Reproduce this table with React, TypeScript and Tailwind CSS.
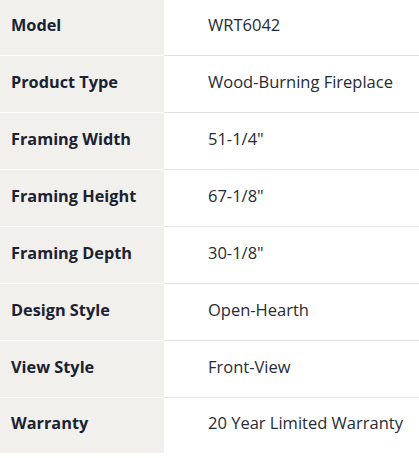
import React from 'react';

const specs = [
  { label: 'Model', value: 'WRT6042' },
  { label: 'Product Type', value: 'Wood-Burning Fireplace' },
  { label: 'Framing Width', value: '51-1/4"' },
  { label: 'Framing Height', value: '67-1/8"' },
  { label: 'Framing Depth', value: '30-1/8"' },
  { label: 'Design Style', value: 'Open-Hearth' },
  { label: 'View Style', value: 'Front-View' },
  { label: 'Warranty', value: '20 Year Limited Warranty' },
];

export default function App() {
  return (
    <div className="w-[419px] h-[458px] bg-white font-['Open_Sans',sans-serif]">
      <div className="flex flex-col">
        {specs.map((spec, index) => {
          const first = index === 0;
          const last = index === specs.length - 1;
          return (
            <div
              key={spec.label}
              className={`flex ${first ? 'h-[56px]' : last ? 'h-[55px]' : 'h-[57px]'}`}
            >
              <div
                className={`w-[164px] flex items-center pl-[11px] pb-[4px] bg-[#f1f0ec] font-bold text-[16.3px] text-[#1b2232] ${
                  last ? '' : 'border-b border-white'
                }`}
              >
                {spec.label}
              </div>
              <div
                className={`flex-1 flex items-center pl-[44px] pb-[4px] text-[16.5px] text-[#262b36] ${
                  last ? '' : 'border-b border-[#e2e2e2]'
                }`}
              >
                {spec.value}
              </div>
            </div>
          );
        })}
      </div>
    </div>
  );
}
